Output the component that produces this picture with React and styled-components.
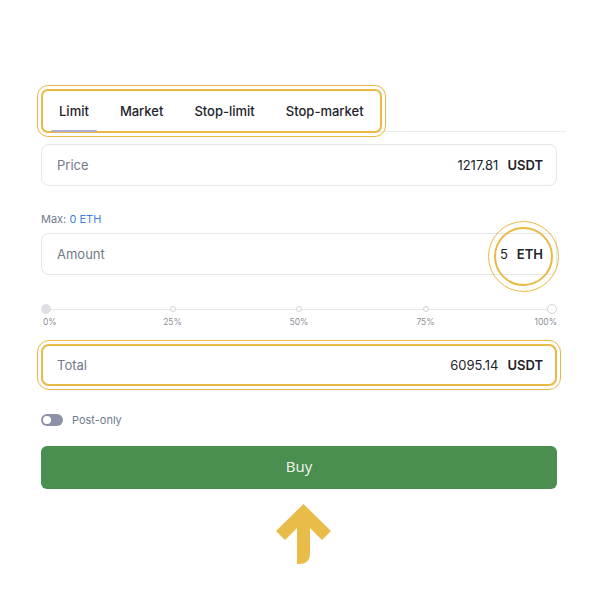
import React from "react";
import styled, { createGlobalStyle } from "styled-components";

const Global = createGlobalStyle`
  html, body { margin: 0; padding: 0; background: #ffffff; }
  body { font-family: Inter, "Noto Sans", "Liberation Sans", sans-serif; color: #1e2329; }
  * { box-sizing: border-box; }
`;

const HL = "#e9b944";

const Page = styled.div`
  width: 600px;
  height: 600px;
  padding: 91px 43px 0 41px;
  display: flex;
  flex-direction: column;
`;

const TabsRow = styled.div`
  display: flex;
  margin-right: -9px;
  border-bottom: 1px solid #e9eaee;
  margin-left: 2px;
`;

const TabList = styled.div`
  display: flex;
  gap: 15px;
  padding: 0 8px 0 8px;
  border-radius: 5px;
  box-shadow: 0 0 0 2px ${HL};
  outline: 1px solid ${HL};
  outline-offset: 5px;
`;

const Tab = styled.div`
  position: relative;
  height: 40px;
  padding: 0 8px;
  display: flex;
  align-items: center;
  font-size: 13px;
  font-weight: 500;
  color: #1e2329;
  &::after {
    content: "";
    position: absolute;
    left: 0;
    right: 0;
    bottom: -1px;
    height: 2px;
    border-radius: 1px;
    background: ${(p) => (p.$active ? "#a9aed3" : "transparent")};
  }
`;

const Field = styled.div`
  height: 42px;
  margin-top: ${(p) => p.$mt}px;
  border: ${(p) => (p.$highlight ? `2px solid ${HL}` : "1px solid #e3e5e9")};
  border-radius: 8px;
  display: flex;
  align-items: center;
  justify-content: space-between;
  padding: 0 ${(p) => (p.$highlight ? 12 : 13)}px 0 ${(p) => (p.$highlight ? 14 : 15)}px;
  ${(p) => (p.$highlight ? `outline: 1px solid ${HL}; outline-offset: 3px;` : "")}
`;

const FieldLabel = styled.span`
  font-size: 13px;
  color: #707a8a;
`;

const ValueGroup = styled.span`
  position: relative;
  display: flex;
  align-items: center;
  gap: 9px;
  font-size: 13px;
`;

const Num = styled.span`
  color: #1e2329;
`;

const Unit = styled.span`
  font-weight: 600;
  color: #1e2329;
`;

const Ring = styled.span`
  position: absolute;
  left: 50%;
  top: 50%;
  width: 59px;
  height: 59px;
  margin-left: -27.5px;
  margin-top: -27.5px;
  border: 2px solid ${HL};
  border-radius: 50%;
  outline: 1px solid ${HL};
  outline-offset: 5px;
  pointer-events: none;
`;

const MaxLine = styled.div`
  margin-top: 26px;
  font-size: 11px;
  line-height: 14px;
  color: #707a8a;
  span { color: #3d7fe0; }
`;

const Slider = styled.div`
  margin-top: ${(p) => (p.$labels ? 0 : 28)}px;
  display: flex;
  justify-content: space-between;
  background: ${(p) =>
    p.$labels ? "none" : "linear-gradient(#e4e6ea, #e4e6ea) center / calc(100% - 10px) 1px no-repeat"};
`;

const Stop = styled.div`
  width: 10px;
  display: flex;
  flex-direction: column;
  align-items: center;
`;

const Dot = styled.span`
  width: ${(p) => (p.$big ? 10 : 6)}px;
  height: ${(p) => (p.$big ? 10 : 6)}px;
  margin: ${(p) => (p.$big ? 1 : 3)}px 0;
  border-radius: 50%;
  background: ${(p) => (p.$filled ? "#dfe0e6" : "#ffffff")};
  border: 1px solid ${(p) => (p.$filled ? "#dfe0e6" : "#cfd2d8")};
`;

const StopLabel = styled.span`
  margin-top: 1px;
  font-size: 8.5px;
  line-height: 12px;
  color: #8a8f99;
  white-space: nowrap;
  align-self: ${(p) => p.$align};
  padding-left: ${(p) => (p.$align === "flex-start" ? 2 : 0)}px;
  ${(p) => (p.$align === "flex-end" ? "direction: rtl;" : "")}
`;

const ToggleRow = styled.div`
  margin-top: 27px;
  display: flex;
  align-items: center;
  gap: 9px;
  height: 14px;
  font-size: 11px;
  color: #707a8a;
`;

const Toggle = styled.span`
  width: 22px;
  height: 12px;
  border-radius: 6px;
  background: #8e90a8;
  display: flex;
  align-items: center;
  padding: 0 2px;
  &::before {
    content: "";
    width: 8px;
    height: 8px;
    border-radius: 50%;
    background: #ffffff;
  }
`;

const BuyButton = styled.button`
  margin-top: 19px;
  height: 43px;
  width: 100%;
  border: none;
  border-radius: 6px;
  background: #4a8f4f;
  color: #eef5ee;
  font-family: "Open Sans", "Noto Sans", sans-serif;
  font-size: 15px;
  font-weight: 400;
  padding: 0 0 3px;
  cursor: pointer;
`;

const ArrowRow = styled.div`
  margin-top: 11px;
  display: flex;
  justify-content: center;
`;

const stops = [
  { label: "0%", align: "flex-start", big: true, filled: true },
  { label: "25%", align: "center" },
  { label: "50%", align: "center" },
  { label: "75%", align: "center" },
  { label: "100%", align: "flex-end", big: true },
];

export default function App() {
  return (
    <>
      <Global />
      <Page>
        <TabsRow>
          <TabList>
            <Tab $active>Limit</Tab>
            <Tab>Market</Tab>
            <Tab>Stop-limit</Tab>
            <Tab>Stop-market</Tab>
          </TabList>
        </TabsRow>

        <Field $mt={12}>
          <FieldLabel>Price</FieldLabel>
          <ValueGroup>
            <Num>1217.81</Num>
            <Unit>USDT</Unit>
          </ValueGroup>
        </Field>

        <MaxLine>
          Max: <span>0 ETH</span>
        </MaxLine>

        <Field $mt={7}>
          <FieldLabel>Amount</FieldLabel>
          <ValueGroup>
            <Num>5</Num>
            <Unit>ETH</Unit>
            <Ring />
          </ValueGroup>
        </Field>

        <Slider>
          {stops.map((s) => (
            <Stop key={s.label}>
              <Dot $big={s.big} $filled={s.filled} />
            </Stop>
          ))}
        </Slider>
        <Slider $labels>
          {stops.map((s) => (
            <Stop key={s.label}>
              <StopLabel $align={s.align}>{s.label}</StopLabel>
            </Stop>
          ))}
        </Slider>

        <Field $mt={16} $highlight>
          <FieldLabel>Total</FieldLabel>
          <ValueGroup>
            <Num>6095.14</Num>
            <Unit>USDT</Unit>
          </ValueGroup>
        </Field>

        <ToggleRow>
          <Toggle />
          Post-only
        </ToggleRow>

        <BuyButton>Buy</BuyButton>

        <ArrowRow>
          <svg width="70" height="66" viewBox="0 0 70 66">
            <path
              d="M39.5 4 L67 31 L58 40 L46 28 L46 53 Q46 64 35 64 L33 64 L33 28 L21 40 L12 31 Z"
              fill="#e9bc4a"
            />
          </svg>
        </ArrowRow>
      </Page>
    </>
  );
}
